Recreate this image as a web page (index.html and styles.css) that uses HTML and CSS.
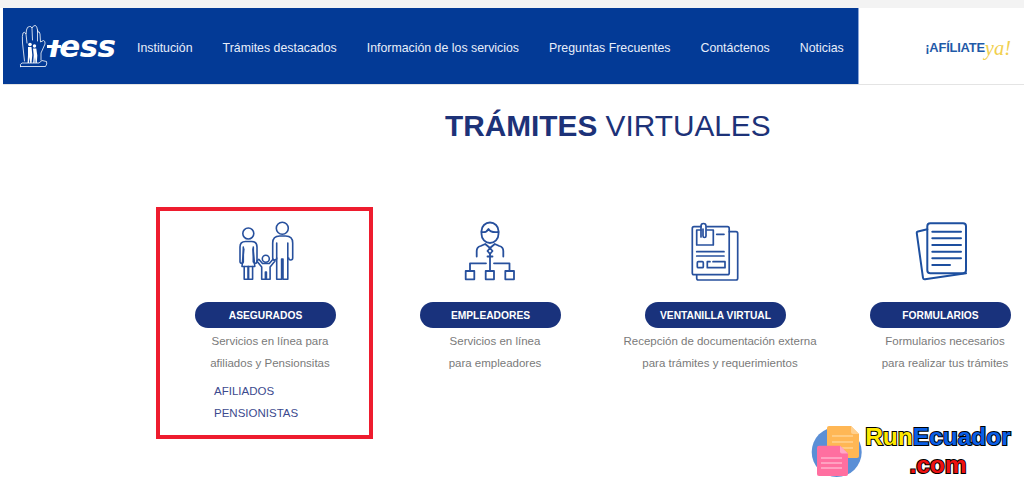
FILE: index.html
```html
<!DOCTYPE html>
<html lang="es">
<head>
<meta charset="utf-8">
<title>Trámites virtuales</title>
<link rel="stylesheet" href="styles.css">
</head>
<body>
<div class="page">
  <header class="topbar">
    <div class="navband">
      <a class="logo" href="#">
        <svg class="logo-mark" viewBox="18 22 30 46" fill="none" stroke="#fff" stroke-width="0.800" stroke-linecap="round" stroke-linejoin="round">
          <path d="M23.500 60 L21.500 42 Q21 34 22 32 Q23.500 30 25 33 L25.500 29 Q26 25.500 28.500 25.500 Q30 25 31 27 Q32.500 24 34.500 24.500 Q36 25.500 36.500 29 L37 31 Q38.500 30 39 33 L39.500 41 L42.500 39.500 Q44.500 40 44 43 L40 52 L40 59"/>
          <path d="M25 33 L26 42 M31 27 L31.500 39 M36.500 29 L36.500 40"/>
          <path d="M19.500 65.500 H44.500 Q46.500 63 45.500 60.500 L41 59.500 L38 62 H26 L21 62 Q18.500 63 19.500 65.500Z"/>
          <g fill="#fff" stroke="none">
            <circle cx="29" cy="43.500" r="1.800"/><circle cx="33.500" cy="45" r="1.700"/>
            <path d="M27 46 h3.500 l.8 8 l-.8 8 h-1.300 l-.4-6 l-.9 6 h-1.300 l.4-8z"/>
            <path d="M32 47.500 h3.300 l1 7 l-.5 7.500 h-1.300 l-.5-6 l-.5 6 h-1.300 l.5-8z"/>
          </g>
        </svg>
        <span class="logo-text">ıess</span>
      </a>
      <nav class="mainnav">
        <a href="#">Institución</a>
        <a href="#">Trámites destacados</a>
        <a href="#">Información de los servicios</a>
        <a href="#">Preguntas Frecuentes</a>
        <a href="#">Contáctenos</a>
        <a href="#">Noticias</a>
      </nav>
    </div>
    <div class="promo"><span class="promo-main">¡AFÍLIATE</span><span class="promo-ya">ya!</span></div>
  </header>

  <main>
    <h1 class="title"><strong>TRÁMITES</strong> VIRTUALES</h1>
    <section class="cards">
      <article class="card">
        <svg class="icon" viewBox="216 215 100 70" fill="none" stroke="#27509d" stroke-width="1.600" stroke-linecap="round" stroke-linejoin="round">
          <circle cx="248.300" cy="233.500" r="5.500"/>
          <path d="M243.300 262 V247 M253.300 262 V247 M243.300 262 a1.700 1.700 0 0 1 -3.300 0 V247 q0-5.500 5.500-5.500 h6 q5.500 0 5.500 5.500 V262 a1.700 1.700 0 0 1 -3.300 0"/>
          <path d="M243.800 249 L242 266.500 H254.800 L253 249"/>
          <path d="M244.200 266.500 V279.300 H248 V266.500 M248.600 266.500 V279.300 H252.600 V266.500"/>
          <circle cx="282.300" cy="228.300" r="6"/>
          <path d="M276.700 243 V279.300 H281.600 V259 M287.800 243 V279.300 H283 V259 M281.600 259 H283"/>
          <path d="M276.700 258 a2 2 0 0 1 -4 0 V243 q0-7 7-7 h6 q7 0 7 7 V258 a2 2 0 0 1 -4 0"/>
          <circle cx="265.800" cy="258.800" r="3.500"/>
          <path d="M258.800 259.300 L262.500 263.500 H269.300 L273 259.300 L275 261 L270.100 267 V279.300 H266.400 V272 H265.400 V279.300 H261.700 V267 L256.800 261Z"/>
        </svg>
        <a class="pill" href="#">ASEGURADOS</a>
        <p class="desc">Servicios en línea para<br>afiliados y Pensionsitas</p>
        <ul class="sublinks">
          <li><a href="#">AFILIADOS</a></li>
          <li><a href="#">PENSIONISTAS</a></li>
        </ul>
        <div class="highlight"></div>
      </article>

      <article class="card">
        <svg class="icon" viewBox="441 215 100 70" fill="none" stroke="#27509d" stroke-width="1.800" stroke-linecap="round" stroke-linejoin="round">
          <path d="M481.500 231 a8.500 8.500 0 0 1 17 0 v3 a8.500 9 0 0 1 -17 0z"/>
          <path d="M481.500 232 q5 1 7-3 q2 4 10 3"/>
          <path d="M476.700 256.500 V251 q0-4 4-5 l4.500-2 l4.800 4 l4.800-4 l4.500 2 q4 1 4 5 V256.500"/>
          <path d="M490 248 l-2.500 3 l2.500 3 l2.500-3z M487.500 256.500 h5"/>
          <path d="M490 254 V271 M470 271 V263.300 H486 M494 263.300 H509.500 V271 M470 263.300 h14"/>
          <rect x="465.700" y="271" width="8.600" height="8.300"/>
          <rect x="485.700" y="271" width="8.300" height="8.300"/>
          <rect x="505.300" y="271" width="8.700" height="8.300"/>
        </svg>
        <a class="pill" href="#">EMPLEADORES</a>
        <p class="desc">Servicios en línea<br>para empleadores</p>
      </article>

      <article class="card">
        <svg class="icon" viewBox="666 215 100 70" fill="none" stroke="#27509d" stroke-width="1.700" stroke-linecap="round" stroke-linejoin="round">
          <path d="M701 226.700 H694 q-1.700 0 -1.700 1.700 V273 q0 1.700 1.700 1.700 H727.500 q1.700 0 1.700 -1.700 V228.400 q0-1.700 -1.700-1.700 H707"/>
          <path d="M729.300 231.700 H736 q1.700 0 1.700 1.700 V278.300 q0 1.700 -1.700 1.700 H698.500 q-1.800 0 -1.800 -1.700 V275"/>
          <path d="M701 230 H696.700 V245 H713.300 V230 H707"/>
          <path d="M701 237 V226 a2.500 2.500 0 0 1 5 0 V236 a1.500 1.500 0 0 1 -3 0 V229"/>
          <path d="M716.700 234.300 H724 M696.700 251.700 H724 M696.700 256 H724"/>
          <rect x="697.300" y="261.700" width="6" height="6" rx="1"/>
          <path d="M713 261.700 H725 V267.700 H707.300 V261.700 H710"/>
        </svg>
        <a class="pill" href="#">VENTANILLA VIRTUAL</a>
        <p class="desc">Recepción de documentación externa<br>para trámites y requerimientos</p>
      </article>

      <article class="card">
        <svg class="icon" viewBox="891 215 100 70" fill="none" stroke="#1d4f9f" stroke-width="2" stroke-linecap="round" stroke-linejoin="round">
          <rect x="927.300" y="223.300" width="38.700" height="50" rx="3"/>
          <path d="M927.300 229.300 L918 231.400 q-1.500 .4 -1.200 2 L923 277.800 q.3 1.700 2 1.500 L966 273.300"/>
          <path d="M932.300 231.700 H961 M932.300 238.300 H961 M932.300 245 H961 M932.300 251.700 H961 M932.300 258.300 H961 M932.300 265 H950"/>
        </svg>
        <a class="pill" href="#">FORMULARIOS</a>
        <p class="desc">Formularios necesarios<br>para realizar tus trámites</p>
      </article>
    </section>
  </main>

  <aside class="watermark">
    <svg class="wm-icon" viewBox="810 424 54 54">
      <circle cx="836.700" cy="452" r="25" fill="#5b8fd6"/>
      <path d="M829 426 H851 L859 434 V456 q0 2 -2 2 H829 q-2 0 -2-2 V428 q0-2 2-2Z" fill="#ffb755"/>
      <path d="M851 426 L859 434 H853 q-2 0 -2-2Z" fill="#ffd08f"/>
      <path d="M832 436 H853 M832 442 H853 M832 448 H853" stroke="#ffe0b0" stroke-width="1"/>
      <path d="M819 445.700 H840 L848 453.500 V474 q0 2 -2 2 H819 q-2 0 -2-2 V448 q0-2.300 2-2.300Z" fill="#ff6fa0"/>
      <path d="M840 445.700 L848 453.500 H842 q-2 0 -2-2Z" fill="#ffa8c5"/>
      <path d="M821 458 H842 M821 463 H842 M821 468 H842" stroke="#ffd3e1" stroke-width="1"/>
    </svg>
    <div class="wm-text">
      <div class="wm-name"><span class="wm-run">Run</span><span class="wm-ecu">Ecuador</span></div>
      <div class="wm-com">.com</div>
    </div>
  </aside>
</div>
</body>
</html>
```
FILE: styles.css
```css
* { box-sizing: border-box; }
html, body { margin: 0; height: 100%; background: #fff; overflow: hidden; }
body { font-family: "Liberation Sans", Arial, sans-serif; }
a { text-decoration: none; color: inherit; }

.page { position: relative; height: 489px; width: 1024px; overflow: hidden; padding: 8px 0 0 3px; background: #fff; }
.page::before { content: ""; position: absolute; left: 0; top: 0; right: 0; height: 8px; background: #f3f3f3; }

.topbar { display: flex; height: 77px; border-bottom: 1px solid #e4e4e4; }
.navband { flex: 0 0 856px; height: 76px; background: #033a96; display: flex; align-items: center; padding-left: 16px; border-right: 1px solid #8aa6d8; }
.logo { display: flex; align-items: center; color: #fff; flex: 0 0 118px; }
.logo-mark { width: 30px; height: 46px; display: block; margin-top: -1px; flex: none; }
.logo-text { position: relative; font-family: "DejaVu Sans", sans-serif; font-weight: 700; font-style: italic; font-size: 31px; line-height: 1; letter-spacing: -0.5px; }
.logo-text::before { content: ""; position: absolute; left: -2px; top: 14px; width: 14px; height: 3px; background: #fff; }
.mainnav { display: flex; gap: 30px; padding-top: 3px; color: #e8eefa; font-size: 12.350px; white-space: nowrap; }
.promo { flex: 1; display: flex; align-items: center; justify-content: flex-end; padding: 2px 13px 0 0; white-space: nowrap; }
.promo-main { color: #1f5aa8; font-weight: 700; font-size: 12.900px; letter-spacing: -0.2px; }
.promo-ya { color: #f1d04f; font-family: "Liberation Serif", serif; font-style: italic; font-size: 20.500px; line-height: 1; margin-top: 3px; }

.title { margin: 0 0 0 442px; padding-top: 24px; height: 122px; font-size: 29.800px; line-height: 34px; font-weight: 400; color: #1d3278; white-space: nowrap; }
.title strong { font-weight: 700; }

.cards { display: flex; padding-left: 150px; width: 1200px; }
.card { position: relative; flex: 0 0 225px; display: flex; flex-direction: column; align-items: center; padding-top: 8px; }
.icon { display: block; flex: none; width: 100px; height: 70px; }
.pill { margin-top: 17px; width: 141px; height: 26px; border-radius: 13px; background: #19327c; color: #fff; font-size: 10.250px; font-weight: 700; display: flex; align-items: center; justify-content: center; white-space: nowrap; }
.desc { margin: 2px 0 0; padding-left: 9px; font-size: 11.500px; line-height: 22px; color: #7a7a7a; text-align: center; white-space: nowrap; }
.sublinks { list-style: none; margin: 6px 0 0; padding: 0 0 0 61px; width: 100%; font-size: 11.500px; line-height: 22px; color: #3c4a8e; }
.highlight { position: absolute; left: 3px; top: 0; width: 217px; height: 232px; border: 4px solid #ee1c2e; }

.watermark { position: absolute; left: 810px; top: 424px; display: flex; }
.wm-icon { width: 54px; height: 54px; display: block; flex: none; }
.wm-text { font-family: "Liberation Sans", sans-serif; font-weight: 700; text-align: center; width: 150px; }
.wm-name { font-size: 24.500px; line-height: 26px; white-space: nowrap; margin-left: -2px; }
.wm-com { font-size: 24.500px; line-height: 26px; margin-top: 2px; margin-left: -2px; color: #ee1111; }
.wm-name, .wm-com { -webkit-text-stroke: 2px #000; paint-order: stroke fill; }
.wm-run { color: #ffe900; }
.wm-ecu { color: #0b5fe6; }
```
